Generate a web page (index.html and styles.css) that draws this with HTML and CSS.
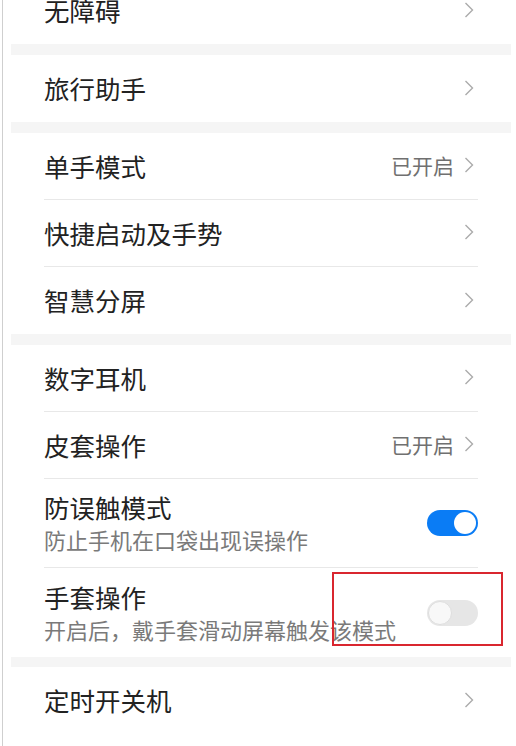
FILE: index.html
```html
<!DOCTYPE html>
<html lang="zh-CN">
<head>
    <meta charset="UTF-8">
    <meta name="viewport" content="width=device-width, initial-scale=1.0">
    <title>辅助功能</title>
    <link rel="stylesheet" href="styles.css">
</head>
<body>
    <div class="screen">
        <div class="settings">
            <div class="group">
                <div class="item">
                    <div class="item-body">
                        <span class="title">无障碍</span>
                        <span class="chevron"><svg viewBox="0 0 10 16" width="10" height="16"><path d="M1.5 1 L8.5 8 L1.5 15" /></svg></span>
                    </div>
                </div>
            </div>

            <div class="group">
                <div class="item">
                    <div class="item-body">
                        <span class="title">旅行助手</span>
                        <span class="chevron"><svg viewBox="0 0 10 16" width="10" height="16"><path d="M1.5 1 L8.5 8 L1.5 15" /></svg></span>
                    </div>
                </div>
            </div>

            <div class="group">
                <div class="item">
                    <div class="item-body">
                        <span class="title">单手模式</span>
                        <span class="value">已开启</span>
                        <span class="chevron"><svg viewBox="0 0 10 16" width="10" height="16"><path d="M1.5 1 L8.5 8 L1.5 15" /></svg></span>
                    </div>
                </div>
                <div class="item">
                    <div class="item-body">
                        <span class="title">快捷启动及手势</span>
                        <span class="chevron"><svg viewBox="0 0 10 16" width="10" height="16"><path d="M1.5 1 L8.5 8 L1.5 15" /></svg></span>
                    </div>
                </div>
                <div class="item">
                    <div class="item-body">
                        <span class="title">智慧分屏</span>
                        <span class="chevron"><svg viewBox="0 0 10 16" width="10" height="16"><path d="M1.5 1 L8.5 8 L1.5 15" /></svg></span>
                    </div>
                </div>
            </div>

            <div class="group">
                <div class="item">
                    <div class="item-body">
                        <span class="title">数字耳机</span>
                        <span class="chevron"><svg viewBox="0 0 10 16" width="10" height="16"><path d="M1.5 1 L8.5 8 L1.5 15" /></svg></span>
                    </div>
                </div>
                <div class="item">
                    <div class="item-body">
                        <span class="title">皮套操作</span>
                        <span class="value">已开启</span>
                        <span class="chevron"><svg viewBox="0 0 10 16" width="10" height="16"><path d="M1.5 1 L8.5 8 L1.5 15" /></svg></span>
                    </div>
                </div>
                <div class="item tall">
                    <div class="item-body">
                        <div class="text">
                            <span class="title">防误触模式</span>
                            <span class="desc">防止手机在口袋出现误操作</span>
                        </div>
                        <span class="switch on"><span class="knob"></span></span>
                    </div>
                </div>
                <div class="item tall marked">
                    <div class="item-body">
                        <div class="text">
                            <span class="title">手套操作</span>
                            <span class="desc">开启后，戴手套滑动屏幕触发该模式</span>
                        </div>
                        <span class="switch"><span class="knob"></span></span>
                    </div>
                    <!-- highlight box from the screenshot -->
                    <div class="mark"></div>
                </div>
            </div>

            <div class="group">
                <div class="item">
                    <div class="item-body">
                        <span class="title">定时开关机</span>
                        <span class="chevron"><svg viewBox="0 0 10 16" width="10" height="16"><path d="M1.5 1 L8.5 8 L1.5 15" /></svg></span>
                    </div>
                </div>
            </div>
        </div>
    </div>
</body>
</html>
```

FILE: styles.css
```css
* {
    margin: 0;
    padding: 0;
    box-sizing: border-box;
}

body {
    font-family: "Noto Sans CJK SC", "Noto Sans", sans-serif;
    background: white;
    color: #222;
    overflow: hidden;
    height: 746px;
    padding-left: 2px;
}

.screen {
    height: 100%;
    border-left: 1px solid #cfcfcf;
    padding-left: 8px;
    padding-right: 5px;
    overflow: hidden;
}

/* list is scrolled a little, first row cut at the top */
.settings {
    margin-top: -23px;
}

.group {
    background: white;
    border-bottom: 11px solid #f5f5f5;
}

.group:last-child {
    border-bottom: none;
}

.group:nth-child(4) {
    border-bottom-width: 10px;
}

.item {
    padding: 0 33px;
    position: relative;
}

.item-body {
    height: 67px;
    display: flex;
    align-items: center;
    padding-bottom: 2px;
    border-bottom: 1px solid #e8e8e8;
}

.item:last-child .item-body {
    border-bottom: none;
}

.item.tall .item-body {
    height: 89px;
    padding-top: 0;
    padding-bottom: 0;
}

.title {
    font-size: 25.5px;
    line-height: 33px;
    flex: 1;
}

.text {
    flex: 1;
    display: flex;
    flex-direction: column;
}

.desc {
    font-size: 22px;
    line-height: 33px;
    color: #7a7a7a;
}

.value {
    font-size: 21px;
    color: #707070;
    margin-right: 10px;
}

.chevron {
    width: 10px;
    height: 16px;
    margin-right: 4px;
    display: flex;
}

.chevron path {
    fill: none;
    stroke: #ababab;
    stroke-width: 1.4;
}

.switch {
    width: 51px;
    height: 26px;
    border-radius: 13px;
    background: #e6e6e6;
    display: flex;
    align-items: center;
    padding: 0 1px;
}

.knob {
    width: 24px;
    height: 24px;
    border-radius: 50%;
    background: #f8f8f8;
    border: 1px solid #dedede;
}

.switch.on {
    background: #0a7cf5;
    justify-content: flex-end;
    padding: 0 2px;
}

.switch.on .knob {
    width: 22px;
    height: 22px;
    background: white;
    border: none;
}

.mark {
    position: absolute;
    left: 321px;
    top: 4px;
    width: 171px;
    height: 74px;
    border: 2px solid #d9262f;
}
```
